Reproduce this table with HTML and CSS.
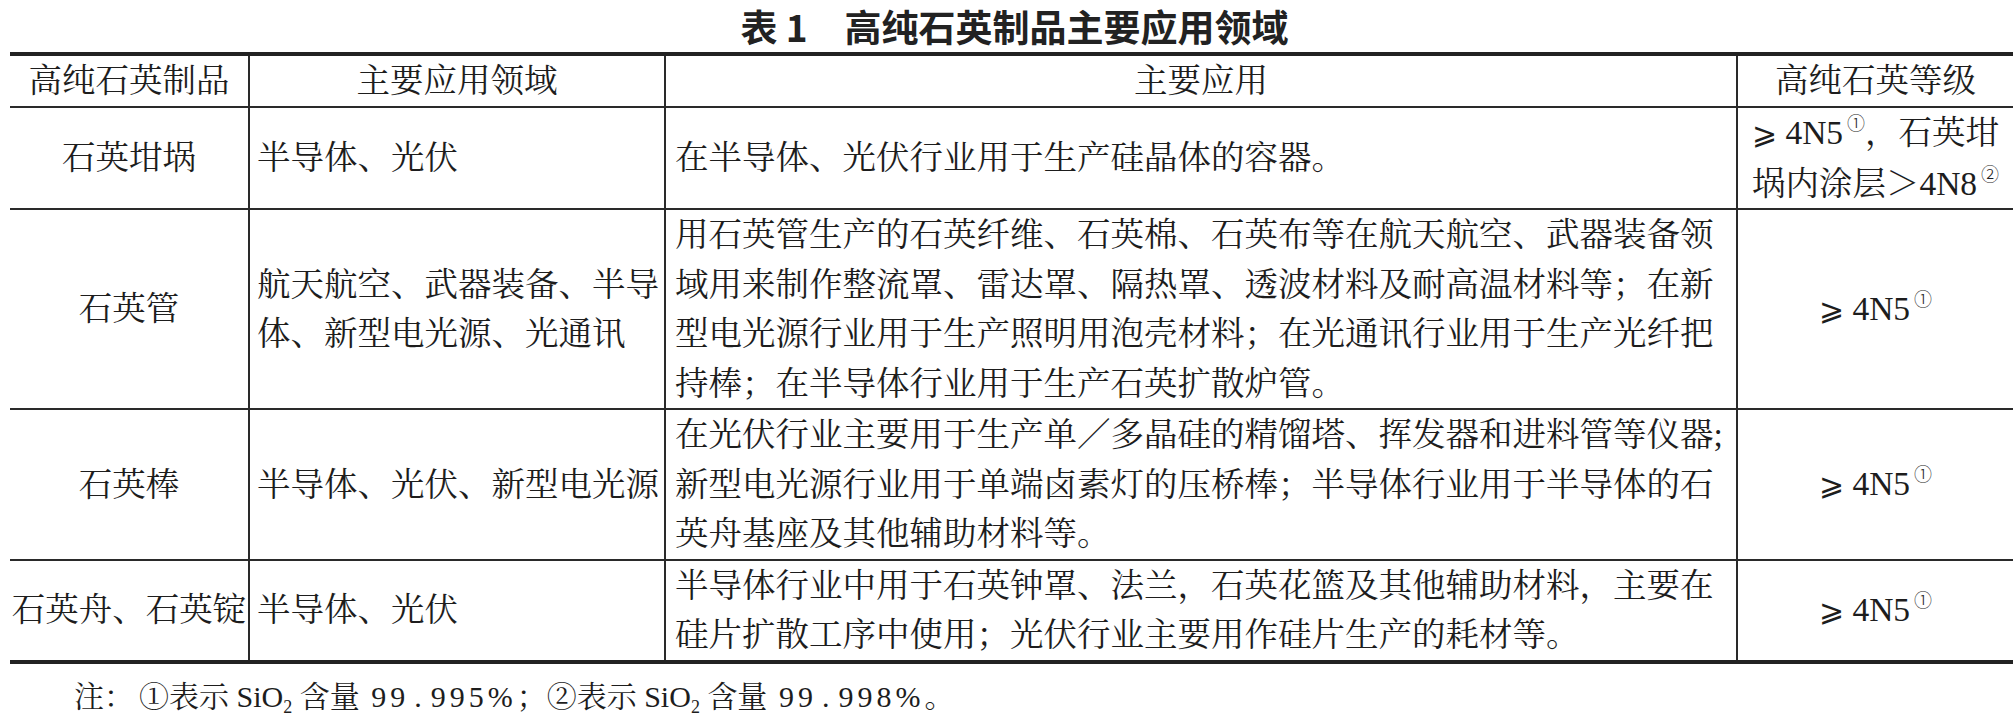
FILE: index.html
```html
<!DOCTYPE html>
<html lang="zh-CN">
<head>
<meta charset="utf-8">
<title>表1 高纯石英制品主要应用领域</title>
<link rel="stylesheet" href="styles.css">
</head>
<body>
<h1 class="title">表 1　高纯石英制品主要应用领域</h1>
<table class="grid">
  <colgroup>
    <col class="c-product">
    <col class="c-field">
    <col class="c-use">
    <col class="c-grade">
  </colgroup>
  <thead>
    <tr>
      <th>高纯石英制品</th>
      <th>主要应用领域</th>
      <th>主要应用</th>
      <th>高纯石英等级</th>
    </tr>
  </thead>
  <tbody>
    <tr>
      <td class="product">石英坩埚</td>
      <td class="field">半导体、光伏</td>
      <td class="use">在半导体、光伏行业用于生产硅晶体的容器。</td>
      <td class="grade"><span class="ge">⩾</span><span class="lat"> 4N5</span><sup class="fn">①</sup>，石英坩<br>埚内涂层＞<span class="lat">4N8</span><sup class="fn">②</sup></td>
    </tr>
    <tr>
      <td class="product">石英管</td>
      <td class="field">航天航空、武器装备、半导<br>体、新型电光源、光通讯</td>
      <td class="use">用石英管生产的石英纤维、石英棉、石英布等在航天航空、武器装备领<br>域用来制作整流罩、雷达罩、隔热罩、透波材料及耐高温材料等；在新<br>型电光源行业用于生产照明用泡壳材料；在光通讯行业用于生产光纤把<br>持棒；在半导体行业用于生产石英扩散炉管。</td>
      <td class="grade"><span class="ge">⩾</span><span class="lat"> 4N5</span><sup class="fn">①</sup></td>
    </tr>
    <tr>
      <td class="product">石英棒</td>
      <td class="field">半导体、光伏、新型电光源</td>
      <td class="use">在光伏行业主要用于生产单／多晶硅的精馏塔、挥发器和进料管等仪器;<br>新型电光源行业用于单端卤素灯的压桥棒；半导体行业用于半导体的石<br>英舟基座及其他辅助材料等。</td>
      <td class="grade"><span class="ge">⩾</span><span class="lat"> 4N5</span><sup class="fn">①</sup></td>
    </tr>
    <tr>
      <td class="product">石英舟、石英锭</td>
      <td class="field">半导体、光伏</td>
      <td class="use">半导体行业中用于石英钟罩、法兰，石英花篮及其他辅助材料，主要在<br>硅片扩散工序中使用；光伏行业主要用作硅片生产的耗材等。</td>
      <td class="grade"><span class="ge">⩾</span><span class="lat"> 4N5</span><sup class="fn">①</sup></td>
    </tr>
  </tbody>
</table>
<p class="note"><span class="lead">注：</span>①表示<span class="lat"> SiO<sub>2</sub> </span>含量<span class="lat num"> 99<span class="dot">.</span>995%</span>；②表示<span class="lat"> SiO<sub>2</sub> </span>含量<span class="lat num"> 99<span class="dot">.</span>998%</span>。</p>
</body>
</html>
```
FILE: styles.css
```css
html, body {
  margin: 0;
  padding: 0;
  background: #ffffff;
}

body {
  width: 2013px;
  overflow: hidden;
  color: #1d1d1d;
  font-family: "Liberation Serif", "Noto Serif CJK SC", "Noto Sans CJK SC", serif;
}

.title {
  margin: 0;
  height: 52px;
  padding-left: 16px;
  line-height: 52px;
  text-align: center;
  font-family: "Noto Sans CJK SC", sans-serif;
  font-weight: 700;
  font-size: 37px;
  color: #222222;
}

.grid {
  width: 2003px;
  margin-left: 10px;
  border-collapse: collapse;
  table-layout: fixed;
  border-top: 4px solid #222222;
  border-bottom: 4px solid #222222;
}

.c-product { width: 239px; }
.c-field { width: 416px; }
.c-use { width: 1072px; }
.c-grade { width: 276px; }

.grid th,
.grid td {
  border: 2px solid #2a2a2a;
  padding: 0;
  font-size: 33.5px;
  line-height: 49.5px;
  font-weight: 400;
  vertical-align: middle;
  white-space: nowrap;
}

.grid th {
  height: 50px;
  text-align: center;
}

.grid th:first-child,
.grid td:first-child {
  border-left: none;
}

.grid th:last-child,
.grid td:last-child {
  border-right: none;
}

.product {
  text-align: center;
}

.field {
  text-align: left;
  padding-left: 7px !important;
}

.use {
  text-align: left;
  padding-left: 9px !important;
}

.grade {
  text-align: center;
}

.lat {
  font-family: "Liberation Serif", "Times New Roman", "DejaVu Serif", serif;
}

.ge {
  font-family: "DejaVu Serif", "DejaVu Sans", serif;
  font-size: 30px;
}

.fn {
  font-family: "Noto Sans CJK SC", sans-serif;
  font-weight: 300;
  font-size: 18px;
  line-height: 0;
  vertical-align: 14px;
  margin-left: 4px;
}

.note {
  margin: 13px 0 0 0;
  padding-left: 74px;
  font-size: 30px;
  line-height: 40px;
  color: #1d1d1d;
}

.note .lead {
  margin-right: 5px;
}

.note sub {
  font-size: 18px;
  line-height: 0;
  vertical-align: -6px;
}

.num {
  letter-spacing: 4px;
}

.dot {
  padding: 0 5px;
}
```
